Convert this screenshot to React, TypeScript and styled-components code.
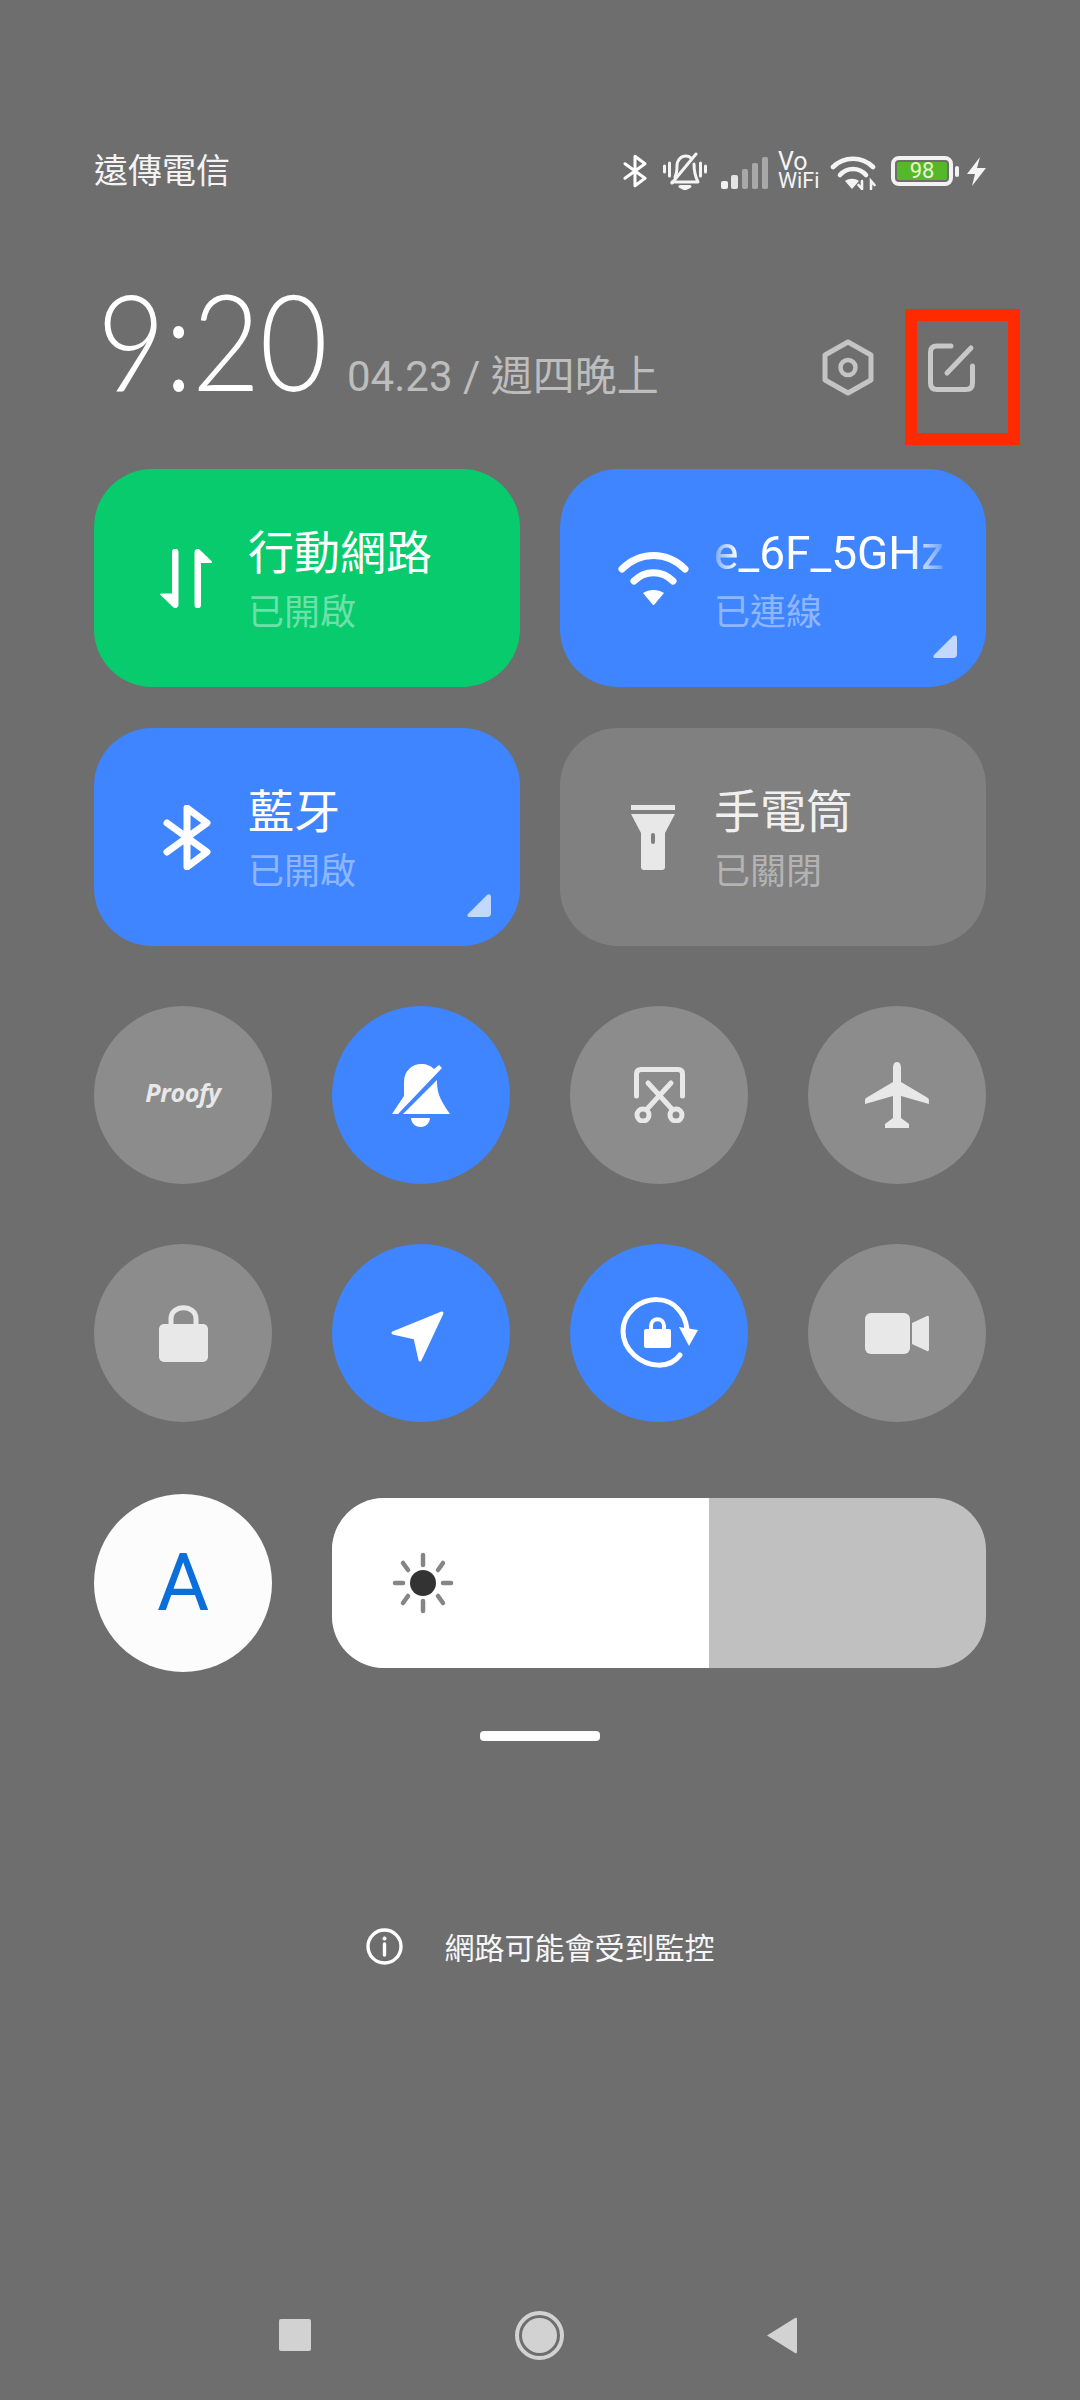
import React from 'react';
import styled, { createGlobalStyle } from 'styled-components';

const colors = {
  page: '#6e6e6e',
  blue: '#3f85ff',
  green: '#07cb6d',
  grayCard: '#808080',
  grayCircle: '#8c8c8c',
  iconOff: '#e8e8e8',
  dim: '#c4c4c4',
};

const GlobalStyle = createGlobalStyle`
  html, body {
    margin: 0;
    padding: 0;
    background: ${colors.page};
  }
  * {
    box-sizing: border-box;
  }
`;

const Screen = styled.div`
  position: relative;
  width: 1080px;
  height: 2400px;
  overflow: hidden;
  padding: 140px 94px 0;
  background: ${colors.page};
  color: #fff;
  font-family: Roboto, "Noto Sans CJK TC", sans-serif;
  display: flex;
  flex-direction: column;
`;

const StatusBar = styled.div`
  height: 60px;
  padding-top: 2px;
  display: flex;
  align-items: center;
  justify-content: space-between;
`;

const Carrier = styled.div`
  font-size: 34px;
  line-height: 58px;
  color: #f4f4f4;
`;

const StatusIcons = styled.div`
  display: flex;
  align-items: center;
`;

const StatusSlot = styled.div<{ $left?: number; $top?: number }>`
  display: flex;
  margin-left: ${p => p.$left || 0}px;
  margin-top: ${p => p.$top || 0}px;
`;

const VoWifi = styled.div`
  width: 42px;
  font-size: 21.5px;
  line-height: 19px;
  color: #f4f4f4;
  &::first-line {
    font-size: 25px;
  }
`;

const Battery = styled.div`
  display: flex;
  align-items: center;
`;

const BatteryBody = styled.div`
  width: 62px;
  height: 30px;
  border: 4px solid #f2f2f2;
  border-radius: 8px;
  padding: 2px;
  display: flex;
`;

const BatteryLevel = styled.div`
  flex: 1;
  background: #55b82a;
  border-radius: 2px;
  display: flex;
  align-items: center;
  justify-content: center;
  font-size: 22px;
  line-height: 18px;
  color: #e4fbd2;
`;

const BatteryNub = styled.div`
  width: 4px;
  height: 11px;
  margin-left: 2px;
  border-radius: 2px;
  background: #f2f2f2;
`;

const Header = styled.div`
  margin-top: 80px;
  height: 128px;
  display: flex;
  align-items: baseline;
  line-height: 120px;
`;

const Clock = styled.div`
  width: 250px;
  margin-left: 3px;
  white-space: nowrap;
  font-family: Lato, sans-serif;
  font-weight: 300;
  font-size: 134px;
  letter-spacing: -1px;
  transform: scaleX(0.88);
  transform-origin: left center;
`;

const DateText = styled.div`
  font-size: 42px;
  color: #bdbdbd;
`;

const HeaderActions = styled.div`
  margin-left: auto;
  align-self: flex-start;
  margin-top: 59px;
  margin-right: 11px;
  display: flex;
  align-items: center;
  gap: 54px;
`;

const CardGrid = styled.div`
  margin-top: 61px;
  display: grid;
  grid-template-columns: 426px 426px;
  grid-auto-rows: 218px;
  column-gap: 40px;
  row-gap: 41px;
`;

const Card = styled.div<{ $bg: string }>`
  position: relative;
  background: ${p => p.$bg};
  border-radius: 58px;
  padding-left: 53px;
  display: flex;
  align-items: center;
`;

const CardIcon = styled.div`
  width: 80px;
  margin-right: 21px;
  display: flex;
  justify-content: center;
  flex-shrink: 0;
`;

const CardText = styled.div`
  margin-top: 9px;
`;

const CardTitle = styled.div<{ $off?: boolean }>`
  font-size: 46px;
  line-height: 60px;
  color: ${p => (p.$off ? '#f0f0f0' : '#fff')};
`;

const WifiName = styled(CardTitle)`
  width: 232px;
  white-space: nowrap;
  mask-image: linear-gradient(90deg, rgba(0, 0, 0, 0.3) 0, #000 24px, #000 196px, rgba(0, 0, 0, 0.3) 226px, transparent 232px);
`;

const CardSub = styled.div`
  font-size: 36px;
  line-height: 60px;
  color: rgba(255, 255, 255, 0.42);
`;

const CornerMark = styled.svg`
  position: absolute;
  right: 29px;
  bottom: 29px;
`;

const CircleGrid = styled.div`
  margin-top: 60px;
  display: grid;
  grid-template-columns: repeat(4, 178px);
  justify-content: space-between;
  row-gap: 60px;
`;

const Circle = styled.div<{ $on?: boolean }>`
  width: 178px;
  height: 178px;
  border-radius: 50%;
  background: ${p => (p.$on ? colors.blue : colors.grayCircle)};
  display: flex;
  align-items: center;
  justify-content: center;
`;

const Proofy = styled.div`
  font-family: "Open Sans", sans-serif;
  font-style: italic;
  font-weight: 700;
  font-size: 25px;
  letter-spacing: -0.3px;
  margin-top: -6px;
  color: #e8e8e8;
`;

const LocationSlot = styled.div`
  display: flex;
  margin: 7px 7px 0 0;
`;

const BrightnessRow = styled.div`
  margin-top: 72px;
  display: flex;
  align-items: center;
  gap: 60px;
`;

const AutoButton = styled.div`
  width: 178px;
  height: 178px;
  border-radius: 50%;
  background: #fcfcfc;
  display: flex;
  align-items: center;
  justify-content: center;
  font-size: 80px;
  font-weight: 400;
  line-height: 82px;
  color: #0a6fdb;
`;

const Slider = styled.div`
  flex: 1;
  height: 170px;
  border-radius: 52px;
  overflow: hidden;
  background: #c0c0c0;
  display: flex;
`;

const SliderFill = styled.div`
  background: #fff;
  padding-left: 60px;
  display: flex;
  align-items: center;
`;

const Handle = styled.div`
  align-self: center;
  margin-top: 59px;
  width: 120px;
  height: 10px;
  border-radius: 4px;
  background: #fff;
`;

const Notice = styled.div`
  align-self: center;
  margin-top: 185px;
  height: 40px;
  display: flex;
  align-items: center;
  gap: 42px;
  font-size: 30px;
  color: #f6f6f6;
`;

const NavBar = styled.div`
  margin-top: 344px;
  margin-left: 185px;
  width: 518px;
  height: 50px;
  display: flex;
  align-items: center;
  justify-content: space-between;
`;

const NavSquare = styled.div`
  width: 32px;
  height: 32px;
  border-radius: 2px;
  background: #d2d2d2;
`;

const NavHome = styled.div`
  width: 49px;
  height: 49px;
  border-radius: 50%;
  border: 4px solid #d2d2d2;
  padding: 3px;
  margin-left: 2px;
`;

const NavHomeDot = styled.div`
  width: 100%;
  height: 100%;
  border-radius: 50%;
  background: #d2d2d2;
`;

const Highlight = styled.div`
  position: absolute;
  left: 905px;
  top: 309px;
  width: 115px;
  height: 136px;
  border: 12px solid #ff2a00;
`;

const BluetoothIcon = ({ w, h, sw }: { w: number; h: number; sw: number }) => (
  <svg width={w} height={h} viewBox="0 0 48 65" fill="none" stroke="#fff" strokeWidth={sw} strokeLinecap="round" strokeLinejoin="round">
    <path d="M4 18 L44 47 L24 62 V3 L44 18 L4 47" />
  </svg>
);

const MutedBellStatus = () => (
  <svg width="44" height="38" viewBox="0 0 44 38" fill="none" stroke="#f4f4f4" strokeWidth="3" strokeLinecap="round" strokeLinejoin="round">
    <path d="M1.5 14 V20 M6.5 11 V24 M37.5 11 V24 M42.5 14 V20" />
    <path d="M12 25 C14 21 14 17 14 14 C14 8 18 4 23 4 C25 4 27 5 28 6" />
    <path d="M31 12 C31 19 32 24 35 30 H9" />
    <path d="M9 31 L33 2" />
    <path d="M17 34.5 H27 L22 37 Z" fill="#f4f4f4" />
  </svg>
);

const SignalIcon = () => (
  <svg width="48" height="32" viewBox="0 0 48 32">
    <rect x="0" y="24" width="7" height="8" rx="2" fill="#f0f0f0" />
    <rect x="10" y="18" width="7" height="14" rx="2" fill="#e4e4e4" />
    <rect x="21" y="12" width="6" height="20" rx="2" fill="#a8a8a8" />
    <rect x="31" y="6" width="6" height="26" rx="2" fill="#a8a8a8" />
    <rect x="41" y="0" width="6" height="32" rx="2" fill="#a8a8a8" />
  </svg>
);

const WifiStatusIcon = () => (
  <svg width="46" height="35" viewBox="0 0 46 35" fill="none" stroke="#f4f4f4" strokeWidth="4.6" strokeLinecap="round">
    <path d="M3 12 C14 1 32 1 43 12" />
    <path d="M10 20 C17 12 29 12 36 20" />
    <path d="M15 26 C19 23 25 23 29 26 L22 34 Z" fill="#f4f4f4" stroke="none" />
    <path d="M32 26 V34 M28.5 30 L32 34 M41 34 V26 L44.5 30" strokeWidth="2.6" />
  </svg>
);

const BoltIcon = () => (
  <svg width="19" height="29" viewBox="0 0 19 29">
    <path d="M13 0 L0 17 H8 L5 29 L19 11 H10 Z" fill="#f4f4f4" />
  </svg>
);

const HexIcon = () => (
  <svg width="52" height="57" viewBox="0 0 52 57" fill="none" stroke={colors.dim} strokeWidth="5" strokeLinejoin="round">
    <path d="M26 3 L49 16 V41 L26 54 L3 41 V16 Z" />
    <circle cx="26" cy="28.5" r="7.5" strokeWidth="4.5" />
  </svg>
);

const EditIcon = () => (
  <svg width="47" height="49" viewBox="0 0 47 49" fill="none" stroke="#c8c8c8" strokeWidth="5" strokeLinecap="round">
    <path d="M23 3 H9 Q2.5 3 2.5 9 V40 Q2.5 46.5 9 46.5 H38 Q44.5 46.5 44.5 40 V23" />
    <path d="M43 5 L19 30" />
  </svg>
);

const DataIcon = () => (
  <svg width="54" height="59" viewBox="0 0 54 59" fill="#fff">
    <path d="M12 3 a3.2 3.2 0 0 1 6.5 0 V56 a3.2 3.2 0 0 1 -5 2.5 L0.5 46 Q-0.5 44.5 1.5 44.5 H12 Z" />
    <path d="M41 56 a3.2 3.2 0 0 1 -6.5 0 V3 a3.2 3.2 0 0 1 5 -2.5 L51.5 12 Q53 14 50.5 14 H41 Z" />
  </svg>
);

const WifiCardIcon = () => (
  <svg width="71" height="53" viewBox="0 0 71 53" fill="none" stroke="#fff" strokeWidth="7" strokeLinecap="round">
    <path d="M4 17 C22 -1 49 -1 67 17" />
    <path d="M16 29 C27 18 44 18 55 29" />
    <path d="M25 41 C31 37 40 37 46 41 L36 53 H35 Z" fill="#fff" stroke="none" />
  </svg>
);

const FlashlightIcon = () => (
  <svg width="44" height="65" viewBox="0 0 44 65">
    <rect x="0" y="0" width="44" height="5" fill={colors.iconOff} />
    <path d="M0 9 H44 L34 28 V62 Q34 65 31 65 H13 Q10 65 10 62 V28 Z" fill={colors.iconOff} />
    <rect x="20" y="28" width="4" height="11" rx="2" fill="#808080" />
  </svg>
);

const BellOffIcon = () => (
  <svg width="60" height="63" viewBox="0 0 60 63" fill="#fff">
    <path d="M1 50 L13 32 V18 C13 7 21 0 30 0 C36 0 40 2 43 5 L48 1 L51 4 L7 50 Z" />
    <path d="M12 50 L46 16 C46 28 48 34 59 50 Z" />
    <path d="M20 54 H39 C38 66 21 66 20 54 Z" />
  </svg>
);

const ScreenshotCutIcon = () => (
  <svg width="53" height="56" viewBox="0 0 53 56" fill="none" stroke={colors.iconOff} strokeWidth="5" strokeLinecap="round">
    <path d="M3.5 29 V7 Q3.5 2.5 8 2.5 H45 Q49.5 2.5 49.5 7 V29" />
    <path d="M15 16 L38 41 M38 16 L15 41" />
    <circle cx="10" cy="48" r="6" />
    <circle cx="43" cy="48" r="6" />
  </svg>
);

const PlaneIcon = () => (
  <svg width="64" height="66" viewBox="0 0 64 66">
    <path
      d="M32 0 C35 0 36 3 36 6 V20 L63 36 C64 37 64 38 64 42 L36 34 V56 L44 62 V66 H20 V62 L28 56 V34 L0 42 C0 38 0 37 1 36 L28 20 V6 C28 3 29 0 32 0 Z"
      fill={colors.iconOff}
    />
  </svg>
);

const LockIcon = () => (
  <svg width="49" height="57" viewBox="0 0 49 57">
    <path d="M12 26 V14 C12 -1 37 -1 37 14 V26" fill="none" stroke={colors.iconOff} strokeWidth="5" />
    <rect x="0" y="19" width="49" height="38" rx="5" fill={colors.iconOff} />
  </svg>
);

const LocationIcon = () => (
  <svg width="55" height="51" viewBox="0 0 55 51">
    <path d="M52 2 L3 22 L25 27 L30 49 Z" fill="#fff" stroke="#fff" strokeWidth="3" strokeLinejoin="round" />
  </svg>
);

const RotateLockIcon = () => (
  <svg width="78" height="72" viewBox="0 0 78 72" fill="none">
    <path d="M60 58 C50 72 28 71 14 58 C-1 44 0 24 13 12 C27 -1 48 0 58 12 C63 17 66 24 67 32" stroke="#fff" strokeWidth="5" strokeLinecap="round" />
    <path d="M59 30 L78 33 L69 49 Z" fill="#fff" />
    <path d="M31 36 V29 C31 20 44 20 44 29 V36" stroke="#fff" strokeWidth="4" />
    <rect x="24" y="32" width="27" height="19" rx="2" fill="#fff" />
  </svg>
);

const VideoIcon = () => (
  <svg width="64" height="41" viewBox="0 0 64 41">
    <rect x="0" y="0" width="45" height="41" rx="6" fill={colors.iconOff} />
    <path d="M47 10 L62 3 Q64 2 64 5 V36 Q64 39 62 38 L47 31 Z" fill={colors.iconOff} />
  </svg>
);

const SunIcon = () => (
  <svg width="62" height="62" viewBox="0 0 62 62" stroke="#858585" strokeWidth="4.5" strokeLinecap="round">
    <path d="M31 3 V13 M31 49 V59 M3 31 H11 M51 31 H59 M11 11 L16 18 M51 11 L46 18 M11 51 L16 44 M51 51 L46 44" />
    <circle cx="31" cy="31" r="13" fill="#333" stroke="none" />
  </svg>
);

const InfoIcon = () => (
  <svg width="37" height="37" viewBox="0 0 37 37" fill="none" stroke="#fff" strokeWidth="3.4">
    <circle cx="18.5" cy="18.5" r="16.5" />
    <path d="M18.5 16 V27" strokeLinecap="round" />
    <circle cx="18.5" cy="10.5" r="1.6" fill="#fff" strokeWidth="1" />
  </svg>
);

const NavBackIcon = () => (
  <svg width="31" height="37" viewBox="0 0 31 37">
    <path d="M1 18.5 L29 1 Q31 0 31 2 V35 Q31 37 29 36 Z" fill="#d2d2d2" />
  </svg>
);

const Corner = () => (
  <CornerMark width="24" height="23" viewBox="0 0 24 23">
    <path d="M20 1 Q24 -1 24 3 V19 Q24 23 20 23 H3 Q-1 23 1 20 Z" fill="#c3d8ff" />
  </CornerMark>
);

const App = () => {
  return (
    <Screen>
      <GlobalStyle />
      <StatusBar>
        <Carrier>遠傳電信</Carrier>
        <StatusIcons>
          <BluetoothIcon w={24} h={38} sw={6} />
          <StatusSlot $left={16}><MutedBellStatus /></StatusSlot>
          <StatusSlot $left={14} $top={3}><SignalIcon /></StatusSlot>
          <StatusSlot $left={9}>
            <VoWifi>Vo<br />WiFi</VoWifi>
          </StatusSlot>
          <StatusSlot $left={10} $top={2}><WifiStatusIcon /></StatusSlot>
          <StatusSlot $left={15}>
            <Battery>
              <BatteryBody>
                <BatteryLevel>98</BatteryLevel>
              </BatteryBody>
              <BatteryNub />
            </Battery>
          </StatusSlot>
          <StatusSlot $left={8}><BoltIcon /></StatusSlot>
        </StatusIcons>
      </StatusBar>

      <Header>
        <Clock>9:20</Clock>
        <DateText>04.23 / 週四晚上</DateText>
        <HeaderActions>
          <HexIcon />
          <EditIcon />
        </HeaderActions>
      </Header>

      <CardGrid>
        <Card $bg={colors.green}>
          <CardIcon><DataIcon /></CardIcon>
          <CardText>
            <CardTitle>行動網路</CardTitle>
            <CardSub>已開啟</CardSub>
          </CardText>
        </Card>
        <Card $bg={colors.blue}>
          <CardIcon><WifiCardIcon /></CardIcon>
          <CardText>
            <WifiName>e_6F_5GHz</WifiName>
            <CardSub>已連線</CardSub>
          </CardText>
          <Corner />
        </Card>
        <Card $bg={colors.blue}>
          <CardIcon><BluetoothIcon w={48} h={65} sw={7} /></CardIcon>
          <CardText>
            <CardTitle>藍牙</CardTitle>
            <CardSub>已開啟</CardSub>
          </CardText>
          <Corner />
        </Card>
        <Card $bg={colors.grayCard}>
          <CardIcon><FlashlightIcon /></CardIcon>
          <CardText>
            <CardTitle $off>手電筒</CardTitle>
            <CardSub>已關閉</CardSub>
          </CardText>
        </Card>
      </CardGrid>

      <CircleGrid>
        <Circle><Proofy>Proofy</Proofy></Circle>
        <Circle $on><BellOffIcon /></Circle>
        <Circle><ScreenshotCutIcon /></Circle>
        <Circle><PlaneIcon /></Circle>
        <Circle><LockIcon /></Circle>
        <Circle $on><LocationSlot><LocationIcon /></LocationSlot></Circle>
        <Circle $on><RotateLockIcon /></Circle>
        <Circle><VideoIcon /></Circle>
      </CircleGrid>

      <BrightnessRow>
        <AutoButton>A</AutoButton>
        <Slider>
          <SliderFill style={{ width: `${(377 / 654) * 100}%` }}>
            <SunIcon />
          </SliderFill>
        </Slider>
      </BrightnessRow>

      <Handle />

      <Notice>
        <InfoIcon />
        <span>網路可能會受到監控</span>
      </Notice>

      <NavBar>
        <NavSquare />
        <NavHome><NavHomeDot /></NavHome>
        <NavBackIcon />
      </NavBar>

      <Highlight />
    </Screen>
  );
};

export default App;
